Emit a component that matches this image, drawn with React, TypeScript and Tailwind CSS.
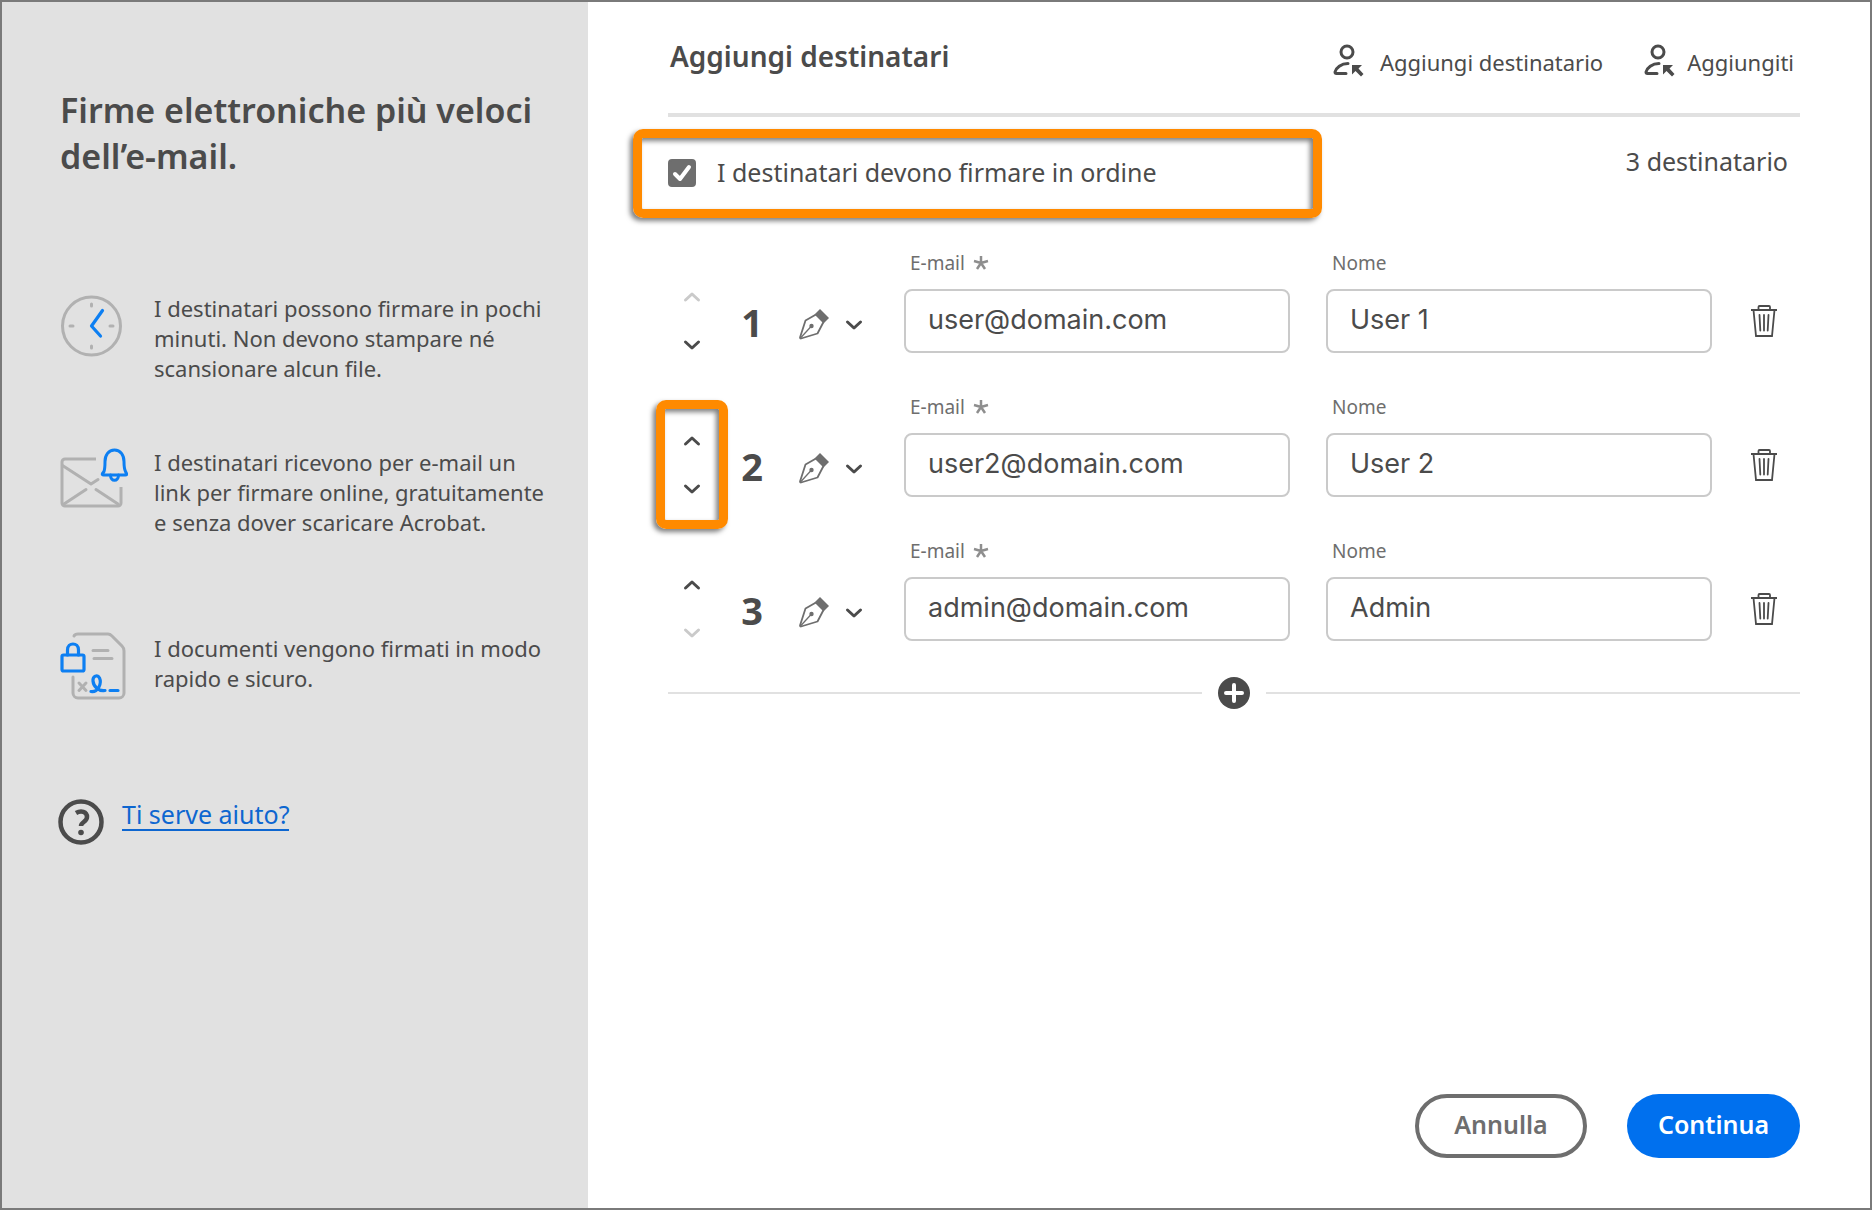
import React, { useState } from 'react';

interface Recipient {
  id: number;
  email: string;
  name: string;
}

const initialRecipients: Recipient[] = [
  { id: 1, email: 'user@domain.com', name: 'User 1' },
  { id: 2, email: 'user2@domain.com', name: 'User 2' },
  { id: 3, email: 'admin@domain.com', name: 'Admin' },
];

const ClockIcon = () => (
  <svg width="66" height="66" viewBox="0 0 66 66" fill="none" strokeLinecap="round" aria-hidden="true">
    <circle cx="33.5" cy="33" r="29" stroke="#b1b1b1" strokeWidth="3" />
    <path d="M33.5 11v2M33.5 53v2M12 33h3M52 33h3" stroke="#b1b1b1" strokeWidth="3" />
    <path d="M44.5 17.5L33.5 33l9 10" stroke="#0d7ff2" strokeWidth="3.2" strokeLinejoin="round" />
  </svg>
);

const MailIcon = () => (
  <svg width="70" height="66" viewBox="0 0 70 66" fill="none" strokeLinecap="round" strokeLinejoin="round" aria-hidden="true">
    <path d="M38 12H7a3 3 0 0 0-3 3v41a3 3 0 0 0 3 3h53a3 3 0 0 0 3-3V40" stroke="#b1b1b1" strokeWidth="3" strokeLinecap="butt" />
    <path d="M4.500 18.500l28.500 18.500 7-4.500M6 57l22-14.500M38 42.500l22 14.500" stroke="#b1b1b1" strokeWidth="3" />
    <path d="M46 24.500c1-3 1-6 1-10C47 8 50.500 3 56.500 3S66 8 66 14.500c0 4 0 7 1.500 10l1 2c.5 1 0 1.500-1 1.500h-22c-1 0-1.500-.5-1-1.500z" stroke="#0d7ff2" strokeWidth="3" />
    <path d="M52.500 28c0 7 8 7 8 0" stroke="#0d7ff2" strokeWidth="3" />
  </svg>
);

const DocumentIcon = () => (
  <svg width="70" height="72" viewBox="0 0 70 72" fill="none" strokeLinecap="round" strokeLinejoin="round" aria-hidden="true">
    <path d="M16 6q1-2 4-2h30q2 0 4 2l10 10q2 2 2 5v42a5 5 0 0 1-5 5H20a5 5 0 0 1-5-5V47" stroke="#b1b1b1" strokeWidth="3" />
    <path d="M35 20.500h15M36 28.500h18" stroke="#b1b1b1" strokeWidth="3" />
    <path d="M21 53l7 7.500M28 53l-7 7.500" stroke="#b1b1b1" strokeWidth="3" />
    <rect x="4" y="25" width="22" height="16" rx="1.500" stroke="#0d7ff2" strokeWidth="3.200" />
    <path d="M9.500 25v-5c0-8 11-8 11 0v5" stroke="#0d7ff2" strokeWidth="3.200" />
    <path d="M33 61.500c7 1 11-8 8.500-13.500-2-4-7-2-6.500 3 .5 5 5 10.500 12 9.500M52 60.500h8" stroke="#0d7ff2" strokeWidth="3.200" />
  </svg>
);

const PersonArrowIcon = () => (
  <svg width="32" height="38" viewBox="0 0 32 38" fill="none" stroke="#4b4b4b" aria-hidden="true">
    <circle cx="15" cy="9" r="6" strokeWidth="3" />
    <path d="M16 20.500C9 20.500 4 25 3 29q0 1.500 1.500 1.500H14" strokeWidth="3" strokeLinecap="round" strokeLinejoin="round" />
    <path d="M20 22h10l-3.500 3.500 5 5.500-2.500 2.500-5.500-5.500-3.500 3.500z" fill="#4b4b4b" stroke="none" />
  </svg>
);

const NibIcon = () => (
  <svg width="32" height="32" viewBox="0 0 32 32" fill="none" aria-hidden="true">
    <path d="M18 5.500L7.500 11.500 2 28.500q0 1 1 1L19.500 24.500 25.500 13" stroke="#6e6e6e" strokeWidth="1.800" strokeLinejoin="round" />
    <path d="M2.500 29l11-12" stroke="#6e6e6e" strokeWidth="1.300" />
    <circle cx="13.500" cy="17" r="2.200" fill="#6e6e6e" />
    <path d="M22 0l9 9-5.500 5.500-9-9z" fill="#6e6e6e" />
  </svg>
);

const TrashIcon = () => (
  <svg width="32" height="34" viewBox="0 0 32 34" fill="none" stroke="#4b4b4b" strokeWidth="1.800" aria-hidden="true">
    <path d="M3 6h26M5.500 6l2.500 26h16l2.500-26M10.500 5.500V3q0-1 1-1h9.500q1 0 1 1v2.500" />
    <path d="M11.500 11l.8 15.500M16 11v15.500M20.500 11l-.8 15.500" strokeLinecap="round" />
  </svg>
);

const Chevron = ({ up = false }: { up?: boolean }) => (
  <svg width="18" height="12" viewBox="0 0 18 12" fill="none" stroke="currentColor" strokeWidth="3" strokeLinecap="round" strokeLinejoin="round" aria-hidden="true">
    <path d={up ? 'M2.500 9L9 3l6.500 6' : 'M2.500 3L9 9l6.500-6'} />
  </svg>
);

const Highlight = ({ className }: { className: string }) => (
  <div
    className={`pointer-events-none absolute rounded-[10px] border-9 border-[#ff8a00] shadow-[-3px_3px_5px_rgba(0,0,0,0.5),inset_-3px_3px_5px_rgba(0,0,0,0.5)] ${className}`}
  />
);

const benefits = [
  {
    icon: <ClockIcon />,
    text: 'I destinatari possono firmare in pochi minuti. Non devono stampare né scansionare alcun file.',
    className: 'mt-[114px]',
  },
  {
    icon: <MailIcon />,
    text: 'I destinatari ricevono per e-mail un link per firmare online, gratuitamente e senza dover scaricare Acrobat.',
    className: 'mt-16',
  },
  {
    icon: <DocumentIcon />,
    text: 'I documenti vengono firmati in modo rapido e sicuro.',
    className: 'mt-24',
  },
];

const Sidebar = () => (
  <aside className="w-[586px] shrink-0 bg-[#e1e1e1] pt-[85px] pr-8 pl-14">
    <h1 className="pl-[2px] text-[34px] leading-[46px] font-semibold">
      Firme elettroniche più veloci dell’e-mail.
    </h1>
    {benefits.map((benefit) => (
      <div key={benefit.text} className={`flex items-start gap-[26px] ${benefit.className}`}>
        <div className="flex h-[66px] w-[70px] shrink-0 items-center">{benefit.icon}</div>
        <p className="max-w-[400px] text-[22px] leading-[30px]">{benefit.text}</p>
      </div>
    ))}
    <div className="mt-[100px] flex items-start gap-[18px]">
      <svg width="46" height="46" viewBox="0 0 46 46" fill="none" stroke="#4b4b4b" strokeLinecap="round" aria-hidden="true">
        <circle cx="23" cy="23" r="20.500" strokeWidth="4.500" />
        <path d="M18 14c5-3 11-1.500 11 4 0 5-6 5-6 9" strokeWidth="4.500" strokeLinecap="butt" />
        <circle cx="23" cy="33.500" r="2.800" fill="#4b4b4b" stroke="none" />
      </svg>
      <a href="#aiuto" className="border-b-2 border-[#0d66d0] text-[25px] leading-[30px] text-[#0d66d0]">
        Ti serve aiuto?
      </a>
    </div>
  </aside>
);

interface RowProps {
  recipient: Recipient;
  position: number;
  isFirst: boolean;
  isLast: boolean;
  onMove: (delta: number) => void;
  onChange: (patch: Partial<Recipient>) => void;
  onRemove: () => void;
}

const inputClass =
  "h-16 w-full rounded-lg border-2 border-[#cacaca] bg-white px-[22px] pb-1 font-['Inter',sans-serif] text-[27px] text-[#4b4b4b]";
const labelClass = 'flex h-[52px] items-center px-[6px] text-[19px] text-[#6e6e6e]';
const arrowClass = 'flex h-6 w-8 items-center justify-center disabled:text-[#cacaca]';

const RecipientRow = ({ recipient, position, isFirst, isLast, onMove, onChange, onRemove }: RowProps) => (
  <div className="flex h-36 items-start">
    <div className="relative mt-12 ml-2 flex h-[72px] w-8 flex-col justify-between">
      <button type="button" aria-label="Sposta su" disabled={isFirst} onClick={() => onMove(-1)} className={arrowClass}>
        <Chevron up />
      </button>
      <button type="button" aria-label="Sposta giù" disabled={isLast} onClick={() => onMove(1)} className={arrowClass}>
        <Chevron />
      </button>
      {position === 2 && <Highlight className="-inset-x-5 -top-[29px] -bottom-[28px]" />}
    </div>
    <span className="mt-[61px] ml-7 w-8 text-center text-[38px] leading-[48px] font-bold">{position}</span>
    <button type="button" aria-label="Ruolo: firmatario" className="mt-[72px] ml-[30px] flex items-center gap-[15px]">
      <NibIcon />
      <Chevron />
    </button>
    <div className="ml-[41px] flex-1">
      <label htmlFor={`email-${recipient.id}`} className={labelClass}>
        E-mail
        <svg width="16" height="16" viewBox="0 0 16 16" className="ml-2" stroke="#8e8e8e" strokeWidth="2.500" aria-hidden="true">
          <path d="M8 8V1M8 8l7-2M8 8l4 6M8 8l-4 6M8 8L1 6" />
        </svg>
      </label>
      <input
        id={`email-${recipient.id}`}
        type="email"
        value={recipient.email}
        onChange={(e) => onChange({ email: e.target.value })}
        className={inputClass}
      />
    </div>
    <div className="ml-9 flex-1">
      <label htmlFor={`name-${recipient.id}`} className={labelClass}>
        Nome
      </label>
      <input
        id={`name-${recipient.id}`}
        type="text"
        value={recipient.name}
        onChange={(e) => onChange({ name: e.target.value })}
        className={inputClass}
      />
    </div>
    <button type="button" aria-label="Elimina destinatario" onClick={onRemove} className="mt-[67px] mr-5 ml-9">
      <TrashIcon />
    </button>
  </div>
);

export default function App() {
  const [recipients, setRecipients] = useState(initialRecipients);
  const [inOrder, setInOrder] = useState(true);

  const move = (index: number, delta: number) => {
    const next = [...recipients];
    [next[index], next[index + delta]] = [next[index + delta], next[index]];
    setRecipients(next);
  };

  const update = (id: number, patch: Partial<Recipient>) =>
    setRecipients(recipients.map((r) => (r.id === id ? { ...r, ...patch } : r)));

  const add = () => setRecipients([...recipients, { id: Date.now(), email: '', name: '' }]);

  return (
    <div className="flex min-h-screen border-2 border-[#7a7a7a] bg-white font-['Noto_Sans',sans-serif] text-[#4b4b4b]">
      <Sidebar />
      <main className="flex min-w-0 flex-1 flex-col pr-[70px] pb-[50px] pl-20">
        <header className="flex h-[115px] items-start justify-between border-b-4 border-[#e1e1e1] pt-9 pr-[6px] pl-[2px]">
          <h2 className="text-[28px] leading-9 font-semibold">Aggiungi destinatari</h2>
          <div className="flex items-start gap-10 text-[22px]">
            <button type="button" onClick={add} className="flex h-12 items-center gap-4">
              <PersonArrowIcon />
              Aggiungi destinatario
            </button>
            <button type="button" onClick={add} className="flex h-12 items-center gap-3">
              <PersonArrowIcon />
              Aggiungiti
            </button>
          </div>
        </header>

        <div className="relative flex h-[120px] items-start justify-between pt-9 pr-3 text-[25px]">
          <Highlight className="top-3 -left-[35px] h-[89px] w-[689px]" />
          <label className="flex h-10 items-center gap-[21px]">
            <span className="grid size-7">
              <input
                type="checkbox"
                checked={inOrder}
                onChange={(e) => setInOrder(e.target.checked)}
                className="peer col-start-1 row-start-1 size-7 appearance-none rounded border-2 border-[#6e6e6e] checked:bg-[#6e6e6e]"
              />
              <svg viewBox="0 0 28 28" className="pointer-events-none invisible col-start-1 row-start-1 peer-checked:visible" fill="none" stroke="#fff" strokeWidth="4" strokeLinecap="round" strokeLinejoin="round" aria-hidden="true">
                <path d="M7 15l5 5 9-12" />
              </svg>
            </span>
            I destinatari devono firmare in ordine
          </label>
          <span className="leading-4">{recipients.length} destinatario</span>
        </div>

        {recipients.map((recipient, index) => (
          <RecipientRow
            key={recipient.id}
            recipient={recipient}
            position={index + 1}
            isFirst={index === 0}
            isLast={index === recipients.length - 1}
            onMove={(delta) => move(index, delta)}
            onChange={(patch) => update(recipient.id, patch)}
            onRemove={() => setRecipients(recipients.filter((r) => r.id !== recipient.id))}
          />
        ))}

        <div className="mt-2 flex items-center gap-4">
          <div className="h-[2px] flex-1 bg-[#e1e1e1]" />
          <button type="button" aria-label="Aggiungi un altro destinatario" onClick={add}>
            <svg width="32" height="32" viewBox="0 0 32 32" aria-hidden="true">
              <circle cx="16" cy="16" r="16" fill="#4b4b4b" />
              <path d="M16 8v16M8 16h16" stroke="#fff" strokeWidth="4" strokeLinecap="round" />
            </svg>
          </button>
          <div className="h-[2px] flex-1 bg-[#e1e1e1]" />
        </div>

        <footer className="mt-auto flex justify-end gap-10 text-[25px] font-semibold">
          <button type="button" className="h-16 w-[172px] rounded-full border-4 border-[#6e6e6e] pb-1 leading-none text-[#6e6e6e]">
            Annulla
          </button>
          <button type="button" className="h-16 w-[173px] rounded-full bg-[#0070ee] pb-1 leading-none text-white">
            Continua
          </button>
        </footer>
      </main>
    </div>
  );
}
